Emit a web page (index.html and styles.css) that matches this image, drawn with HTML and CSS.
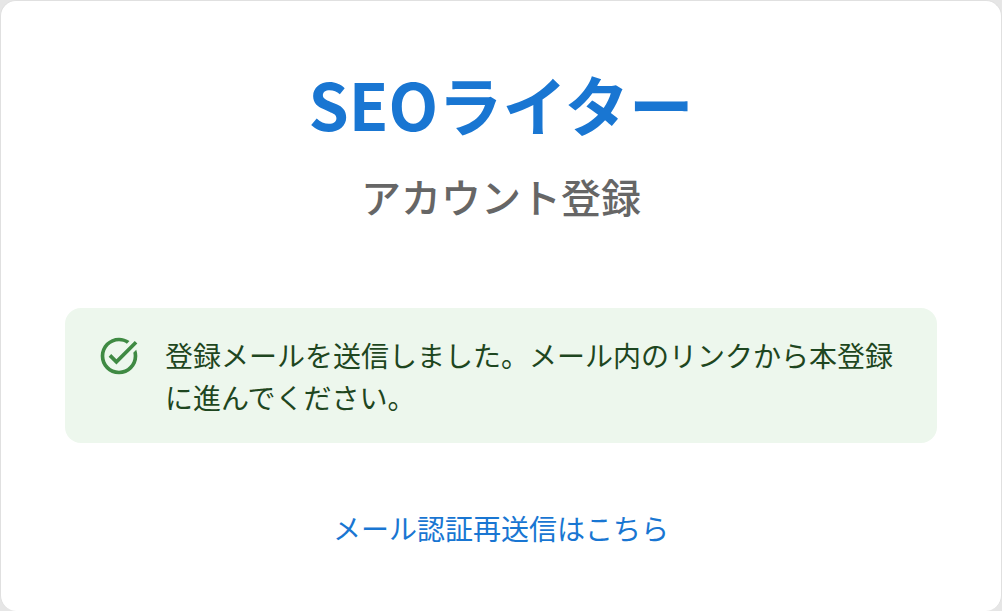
FILE: index.html
```html
<!DOCTYPE html>
<html lang="ja">
<head>
<meta charset="utf-8">
<title>アカウント登録</title>
<link rel="stylesheet" href="styles.css">
</head>
<body>
<main class="card">
  <h1 class="brand">SEOライター</h1>
  <h2 class="subtitle">アカウント登録</h2>
  <div class="alert">
    <svg class="alert-icon" viewBox="0 0 24 24" aria-hidden="true"><path d="M22 5.18 10.59 16.6l-4.24-4.24 1.41-1.41 2.83 2.83 10-10L22 5.18zm-2.21 5.04c.13.57.21 1.17.21 1.78 0 4.42-3.58 8-8 8s-8-3.58-8-8 3.58-8 8-8c1.58 0 3.04.46 4.28 1.25l1.44-1.44C16.1 2.67 14.13 2 12 2 6.48 2 2 6.48 2 12s4.48 10 10 10 10-4.48 10-10c0-1.19-.22-2.33-.6-3.39l-1.61 1.61z"/></svg>
    <p class="alert-text">登録メールを送信しました。メール内のリンクから本登録に進んでください。</p>
  </div>
  <a class="resend" href="#">メール認証再送信はこちら</a>
</main>
</body>
</html>
```
FILE: styles.css
```css
* { box-sizing: border-box; }
html, body { margin: 0; height: 100%; background: #e6e6e6; }
body { font-family: Roboto, "Noto Sans CJK JP", sans-serif; overflow: hidden; }
.card {
  height: 611px;
  border: 1px solid #e0e0e0;
  border-bottom: 0;
  border-radius: 16px;
  background: #fff;
  padding: 62px 64px 0;
  display: flex;
  flex-direction: column;
  align-items: stretch;
  text-align: center;
}
.brand {
  margin: 0;
  font-family: "Noto Sans CJK JP", sans-serif;
  font-size: 64.500px;
  font-weight: 700;
  line-height: 80px;
  color: #1976d2;
}
.subtitle {
  margin: 29px 0 0;
  font-family: "Noto Sans CJK JP", sans-serif;
  font-size: 40px;
  font-weight: 500;
  line-height: 48px;
  color: #666;
}
.alert {
  margin-top: 88px;
  display: flex;
  align-items: flex-start;
  gap: 24px;
  padding: 26px 32px 22px;
  border-radius: 16px;
  background: #edf7ed;
  text-align: left;
}
.alert-icon { width: 44px; height: 44px; flex: none; fill: #3f8a43; }
.alert-text {
  margin: 3px 0 0;
  font-size: 28px;
  line-height: 42px;
  color: #1e4620;
}
.resend {
  margin-top: 67px;
  font-size: 28px;
  line-height: 42px;
  color: #1976d2;
  text-decoration: none;
}
```
